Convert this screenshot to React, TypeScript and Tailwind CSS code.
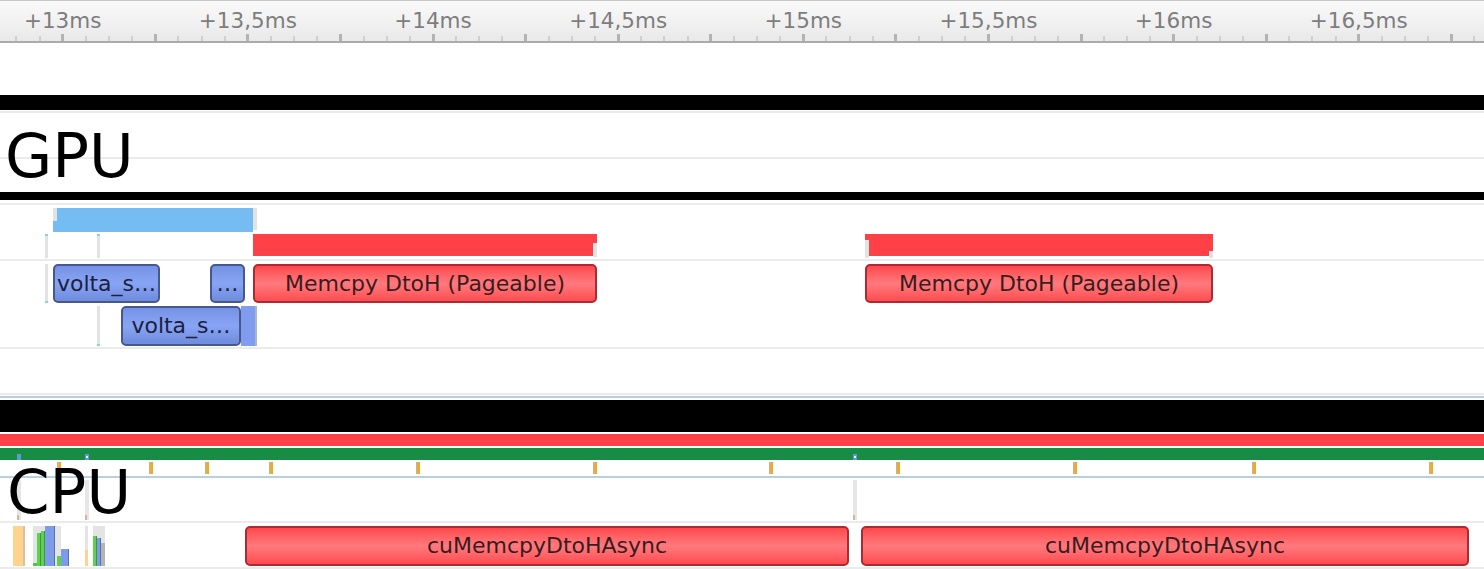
import React from 'react';

// timeline scale: 13ms sits at x=62.7, 1ms = 370.3px
const PX_PER_MS = 370.3;
const X13 = 62.7;
const STEP = PX_PER_MS / 16;

const ticks = Array.from({ length: 64 }, (_, k) => k - 2).map((i) => ({ i, x: X13 + i * STEP }));

const fmt = (i: number) => {
  const ms = 13 + i / 16;
  return '+' + String(ms).replace('.', ',') + 'ms';
};

type Tone = 'red' | 'blue';

interface BoxProps {
  left: number;
  width: number;
  top: number;
  height: number;
  label: string;
  tone: Tone;
}

const Box: React.FC<BoxProps> = ({ left, width, top, height, label, tone }) => (
  <div
    className={`absolute flex items-center justify-center overflow-hidden whitespace-nowrap rounded-[5px] border-2 text-[22px] leading-none ${
      tone === 'red'
        ? 'border-[#ac2a31] bg-linear-to-b from-[#ff474d] via-[#ff797d] to-[#ff4a50] text-[#3a1c1e]'
        : 'border-[#47588f] bg-linear-to-b from-[#7593e4] via-[#88a4f5] to-[#6e8bdc] text-[#1b2040]'
    }`}
    style={{ left, width, top, height }}
  >
    {label}
  </div>
);

const Line = ({ color = 'bg-[#ebebeb]' }: { color?: string }) => <div className={`h-[2px] ${color}`} />;

const orangeTicks = [57, 149, 205, 269, 416, 593, 769, 896, 1073, 1252, 1429];

export default function App() {
  return (
    <div className="relative h-[569px] w-[1484px] overflow-hidden bg-white font-['DejaVu_Sans',sans-serif]">
      {/* time ruler */}
      <div className="relative h-[43px] border-t border-b-2 border-t-[#c6c6c6] border-b-[#ababab] bg-linear-to-b from-[#fafafa] to-[#e9e9e9]">
        {ticks.map((t) =>
          t.i % 4 === 0 ? (
            <div key={t.i} className="absolute bottom-0 h-[7px] w-[3px] bg-[#b3b3b3]" style={{ left: t.x - 1.5 }} />
          ) : (
            <div key={t.i} className="absolute bottom-0 h-[5px] w-[2px] bg-[#d0d0d0]" style={{ left: t.x - 1 }} />
          )
        )}
        {ticks
          .filter((t) => t.i % 8 === 0 && t.x < 1484)
          .map((t) => (
            <div
              key={'l' + t.i}
              className="absolute top-[7px] -translate-x-1/2 whitespace-nowrap text-[21.5px] leading-[25px] text-[#7d7d7d]"
              style={{ left: t.x }}
            >
              {fmt(t.i)}
            </div>
          ))}
      </div>

      <div className="h-[52px]" />
      <div className="h-[15px] bg-black" />

      {/* GPU header */}
      <div className="h-[82px] pt-px">
        <div className="h-[46px] border-t-2 border-[#ebebeb]" />
        <div className="h-[35px] border-t-2 border-[#ebebeb]" />
      </div>
      <div className="mb-[3px] h-[8px] bg-black" />

      {/* row A: activity summary */}
      <div className="relative h-[56px] border-t-2 border-[#ebebeb]">
        <div className="absolute left-[53px] top-[3px] h-[24px] w-[200px] bg-[#74bcf2]" />
        <div className="absolute left-[53px] top-[3px] h-[13px] w-[4px] bg-[#e3e3e3]" />
        <div className="absolute left-[253px] top-[3px] h-[22px] w-[4px] bg-[#e3e3e3]" />
        <div className="absolute left-[45px] top-[29px] h-[24px] w-[3px] border-t-2 border-[#7fd6e4] bg-[#e3e3e3]" />
        <div className="absolute left-[97px] top-[29px] h-[24px] w-[3px] border-t-2 border-[#7fd6e4] bg-[#e3e3e3]" />
        <div className="absolute left-[253px] top-[29px] h-[22px] w-[344px] bg-[#ff4046]" />
        <div className="absolute left-[593px] top-[38px] h-[14px] w-[4px] bg-[#e3e3e3]" />
        <div className="absolute left-[865px] top-[29px] h-[22px] w-[348px] bg-[#ff4046]" />
        <div className="absolute left-[865px] top-[35px] h-[18px] w-[4px] bg-[#e3e3e3]" />
        <div className="absolute left-[1209px] top-[46px] h-[7px] w-[4px] bg-[#e3e3e3]" />
      </div>

      {/* row B: kernels and copies */}
      <div className="relative h-[88px] border-t-2 border-[#ebebeb]">
        <div className="absolute left-[45px] top-[3px] h-[39px] w-[3px] border-b-2 border-[#7fd6e4] bg-[#e3e3e3]" />
        <div className="absolute left-[97px] top-[45px] h-[40px] w-[3px] border-b-2 border-[#7fd6e4] bg-[#e3e3e3]" />
        <Box left={53} width={107} top={3} height={39} label="volta_s…" tone="blue" />
        <Box left={210} width={35} top={3} height={39} label="…" tone="blue" />
        <Box left={253} width={344} top={3} height={39} label="Memcpy DtoH (Pageable)" tone="red" />
        <Box left={865} width={348} top={3} height={39} label="Memcpy DtoH (Pageable)" tone="red" />
        <Box left={121} width={120} top={45} height={40} label="volta_s…" tone="blue" />
        <div className="absolute left-[241px] top-[45px] h-[40px] w-[16px] border-r-2 border-[#a8b4d6] bg-[#7f9cee]" />
      </div>

      <div className="h-[46px] border-t-2 border-[#ebebeb]" />
      <Line />
      <div className="h-px" />
      <Line color="bg-[#b9cde1]" />
      <div className="h-[2px]" />

      {/* CPU header bars */}
      <div className="flex flex-col gap-[2px]">
        <div className="h-[32px] bg-black" />
        <div className="h-[12px] bg-[#ff4047]" />
        <div className="relative h-[12px] bg-[#168c45]">
          {[17, 85, 853].map((x) => (
            <div
              key={x}
              className="absolute top-[6px] flex h-[6px] w-[4px] items-center justify-center bg-[#5d9bd6]"
              style={{ left: x }}
            >
              {x !== 17 && <div className="h-[2px] w-[2px] bg-white" />}
            </div>
          ))}
        </div>
      </div>
      <div className="relative h-[16px]">
        {orangeTicks.map((x) => (
          <div key={x} className="absolute top-[2px] flex h-[12px] w-[4px]" style={{ left: x }}>
            <div className="w-[1.5px] bg-[#d2b07a]" />
            <div className="flex-1 bg-[#f8a61c]" />
          </div>
        ))}
      </div>
      <Line color="bg-[#bccfe0]" />

      {/* CPU thread row */}
      <div className="relative h-[43px]">
        {[17, 85, 853].map((x) => (
          <div
            key={x}
            className="absolute top-[2px] flex h-[40px] w-[4px] flex-col justify-end bg-[#e6e6e6]"
            style={{ left: x }}
          >
            <div className="h-[5px] w-[2px] bg-[#cdb99a]" />
          </div>
        ))}
      </div>
      <Line />

      {/* CPU API row */}
      <div className="relative h-[44px]">
        <div className="absolute left-[13px] top-[3px] h-[40px] w-[12px] border-r-2 border-[#d9c2a0] bg-[#fdd38f]" />
        <div className="absolute left-[33px] top-[3px] flex h-[40px] items-end">
          <div className="flex h-full w-[28px] items-end bg-[#e4e4e4]">
            <div className="h-[3px] w-[4px] bg-[#56c24c]" />
            <div className="h-[33px] w-[4px] border-r border-[#3a9a35] bg-[#5fd04f]" />
            <div className="h-[35px] w-[4px] border-r border-[#3a9a35] bg-[#5fd04f]" />
            <div className="h-[40px] w-[10px] border-r border-[#5870b0] bg-[#7d9bea]" />
            <div className="w-[2px]" />
            <div className="h-[10px] w-[4px] bg-[#5fd04f]" />
          </div>
          <div className="h-[17px] w-[8px] border-r border-[#5870b0] bg-[#7d9bea]" />
        </div>
        <div className="absolute left-[85px] top-[3px] flex h-[40px] w-[3px] items-end bg-[#e4e4e4]">
          <div className="h-[16px] w-full bg-[#fdd38f]" />
        </div>
        <div className="absolute left-[93px] top-[3px] flex h-[40px] w-[12px] items-end bg-[#e4e4e4]">
          <div className="h-[30px] w-[4px] border-r border-[#3a9a35] bg-[#5fd04f]" />
          <div className="h-[28px] w-[4px] border-r border-[#5870b0] bg-[#7d9bea]" />
          <div className="h-[23px] w-[4px] bg-[#b4b4b4]" />
        </div>
        <Box left={245} width={604} top={3} height={40} label="cuMemcpyDtoHAsync" tone="red" />
        <Box left={861} width={608} top={3} height={40} label="cuMemcpyDtoHAsync" tone="red" />
      </div>
      <Line />

      {/* section labels drawn over the tracks */}
      <div className="absolute left-[5px] top-[120px] text-[61px] leading-[71px] text-black">GPU</div>
      <div className="absolute left-[7px] top-[456px] text-[61px] leading-[71px] text-black">CPU</div>
    </div>
  );
}
